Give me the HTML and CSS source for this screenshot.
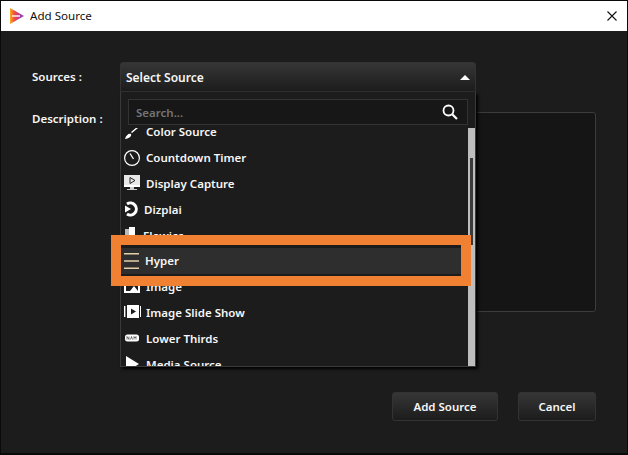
FILE: index.html
```html
<!DOCTYPE html>
<html lang="en">
<head>
<meta charset="utf-8">
<title>Add Source</title>
<link rel="stylesheet" href="styles.css">
</head>
<body>
<div class="window">
  <header class="titlebar">
    <svg class="logo" width="14" height="16" viewBox="0 0 14 16">
      <defs>
        <linearGradient id="lg" x1="0" y1="0" x2="1" y2="0">
          <stop offset="0" stop-color="#fbb01a"/>
          <stop offset=".3" stop-color="#f0503a"/>
          <stop offset=".65" stop-color="#c0359a"/>
          <stop offset="1" stop-color="#6c4bc4"/>
        </linearGradient>
      </defs>
      <path d="M0 0 L14 8 L0 16 Z" fill="url(#lg)"/>
      <rect x="2" y="7" width="8" height="2" fill="#fff" opacity=".7"/>
    </svg>
    <span class="title">Add Source</span>
    <svg class="close" width="10" height="10" viewBox="0 0 10 10"><path d="M0.5 0.5 L9.5 9.5 M9.5 0.5 L0.5 9.5" stroke="#111" stroke-width="1.1" fill="none"/></svg>
  </header>
  <main class="content">
    <form class="form">
      <label class="label label-center">Sources :</label>
      <div class="select">
        <div class="select-head">
          <span>Select Source</span>
          <svg width="10" height="5" viewBox="0 0 10 5"><path d="M5 0 L10 5 L0 5 Z" fill="#fff"/></svg>
        </div>
        <div class="panel">
          <div class="search">
            <span class="placeholder">Search...</span>
            <svg width="16" height="16" viewBox="0 0 16 16"><circle cx="6.5" cy="6.5" r="5" stroke="#fff" stroke-width="1.8" fill="none"/><path d="M10.5 10.5 L15 15" stroke="#fff" stroke-width="2.2"/></svg>
          </div>
          <div class="list-wrap">
            <ul class="list">
              <li class="item">
                <svg class="icon" viewBox="0 0 18 18"><path d="M2 16 C3 12 6 10 8 11 C9 13 6 16 2 16 Z M9 10 L8 9 L14 4 L15 5 Z" fill="#fff"/></svg>
                <span>Color Source</span>
              </li>
              <li class="item">
                <svg class="icon" viewBox="0 0 18 18"><circle cx="9" cy="9" r="7.4" stroke="#fff" stroke-width="1.2" fill="none"/><path d="M7 4.5 L10.5 10" stroke="#fff" stroke-width="1.3"/></svg>
                <span>Countdown Timer</span>
              </li>
              <li class="item">
                <svg class="icon" viewBox="0 0 18 18"><path d="M1 1 H17 V13 H1 Z" fill="#e8e8e8"/><path d="M7 3.5 L12 6.5 L7 9.5 Z" fill="none" stroke="#222"/><path d="M1 11 H17 V13 H1 Z" fill="#fff"/><path d="M7 13 H11 V15 H14 V16 H4 V15 H7 Z" fill="#ccc"/></svg>
                <span>Display Capture</span>
              </li>
              <li class="item item-tight">
                <svg class="icon" viewBox="0 0 18 18"><path d="M4 4 A6 6 0 1 1 4 14" stroke="#fff" stroke-width="3" fill="none"/><path d="M2 5.5 L8 9 L2 12.5 Z" fill="#fff"/></svg>
                <span>Dizplai</span>
              </li>
              <li class="item item-tighter">
                <svg class="icon" viewBox="0 0 18 18"><rect x="2" y="3" width="5" height="12" fill="#bbb"/><rect x="6" y="1" width="6" height="15" fill="#fff"/></svg>
                <span>Flowics</span>
              </li>
              <li class="item item-hyper">
                <svg class="icon" viewBox="0 0 18 18"><path d="M1 1 H16 V2.4 H1 Z M1 8.3 H16 V9.7 H1 Z M1 15.6 H16 V17 H1 Z" fill="#e6cfa8"/></svg>
                <span>Hyper</span>
              </li>
              <li class="item">
                <svg class="icon" viewBox="0 0 18 18"><path d="M1 2 H17 V15 H1 Z M3 4 V13 H15 V4 Z" fill="#fff" fill-rule="evenodd"/><path d="M7 13 L11 8 L15 13 Z" fill="#fff"/></svg>
                <span>Image</span>
              </li>
              <li class="item">
                <svg class="icon" viewBox="0 0 18 18"><rect x="4" y="2" width="12" height="13" fill="#fff"/><rect x="1" y="3" width="1.4" height="11" fill="#fff"/><rect x="17" y="3" width="1" height="11" fill="#fff"/><path d="M8 5.5 L13 8.5 L8 11.5 Z" fill="#1c1c1c"/></svg>
                <span>Image Slide Show</span>
              </li>
              <li class="item">
                <svg class="icon" viewBox="0 0 18 18"><rect x="2" y="5.5" width="14" height="7" rx="2.5" fill="#fff"/><path d="M4 10.5 V7.5 L6 10.5 V7.5 M7.5 10.5 L8.5 7.5 L9.5 10.5 M11 10.5 V7.5 L12 9 L13 7.5 V10.5" stroke="#222" stroke-width=".6" fill="none"/></svg>
                <span>Lower Thirds</span>
              </li>
              <li class="item">
                <svg class="icon" viewBox="0 0 18 18"><path d="M3 1 L16 9 L3 17 Z" fill="#fff"/></svg>
                <span>Media Source</span>
              </li>
            </ul>
            <div class="scrollbar"><div class="thumb"></div></div>
          </div>
        </div>
      </div>
      <label class="label">Description :</label>
      <div class="description"></div>
    </form>
    <footer class="actions">
      <button class="btn btn-add" type="button">Add Source</button>
      <button class="btn btn-cancel" type="button">Cancel</button>
    </footer>
  </main>
  <div class="annotation"></div>
</div>
</body>
</html>
```
FILE: styles.css
```css
* { box-sizing: border-box; }
html, body { margin: 0; height: 100%; }
body {
  font-family: "Noto Sans", "Open Sans", sans-serif;
  font-size: 11.5px;
  background: #000;
  overflow: hidden;
}
.window {
  position: relative;
  height: 455px;
  border: 1px solid #0a0a0a;
  border-bottom-width: 2px;
  display: flex;
  flex-direction: column;
  background: #1c1c1c;
}
.titlebar {
  height: 30px;
  flex: none;
  background: #fff;
  display: flex;
  align-items: center;
  padding: 0 10px 0 9px;
  color: #111;
}
.logo { flex: none; margin-right: 6px; }
.title { flex: 1; font-size: 11.6px; padding-bottom: 2px; }
.close { flex: none; }
.content {
  flex: 1;
  padding: 31px 31px 0;
  color: #f6f6f6;
  font-weight: 600;
}
.form {
  display: grid;
  grid-template-columns: 88px 1fr;
  grid-template-rows: 30px 200px;
  row-gap: 20px;
}
.label { line-height: 14px; }
.label-center { align-self: center; }
.select { position: relative; width: 356px; z-index: 2; }
.select-head {
  height: 30px;
  display: flex;
  align-items: center;
  justify-content: space-between;
  padding: 0 5px;
  font-size: 12px;
  background: linear-gradient(#363636, #1c1c1c);
  border: 1px solid #333;
  border-radius: 3px 3px 0 0;
}
.panel {
  position: absolute;
  left: 0;
  right: 0;
  top: 30px;
  height: 275px;
  background: #1c1c1c;
  border: 1px solid #3a3a3a;
  border-top: 0;
  box-shadow: 2px 2px 3px #000;
  display: flex;
  flex-direction: column;
}
.search {
  flex: none;
  height: 26px;
  margin: 7px 7px 3px;
  padding: 0 9px 0 7px;
  background: #171717;
  border: 1px solid #333;
  display: flex;
  align-items: center;
  justify-content: space-between;
}
.placeholder { color: #747474; }
.list-wrap { flex: 1; min-height: 0; display: flex; }
.list {
  flex: 1;
  min-width: 0;
  margin: 0;
  padding: 0;
  list-style: none;
  overflow: hidden;
}
.item {
  height: 25.8px;
  display: flex;
  align-items: center;
  padding-left: 2px;
  gap: 5px;
  color: #f6f6f6;
}
.item:first-child { margin-top: -9px; }
.icon { width: 18px; height: 18px; flex: none; }
.item-tight { gap: 3px; }
.item-tighter { gap: 2px; }
.item-hyper { gap: 4px; background: #2e2e2e; }
.scrollbar {
  flex: none;
  width: 7px;
  padding-top: 30px;
  background: #bdbdbd;
  display: flex;
  justify-content: center;
}
.thumb { width: 3px; height: 87px; background: #3a3a3a; }
.description {
  background: #151515;
  border: 1px solid #3c3c3c;
  border-radius: 3px;
}
.actions {
  margin-top: 80px;
  display: flex;
  justify-content: flex-end;
  gap: 20px;
}
.btn {
  height: 29px;
  padding: 0;
  font: inherit;
  color: #f6f6f6;
  background: linear-gradient(#363636, #1c1c1c);
  border: 1px solid #333;
  border-radius: 3px;
}
.btn-add { width: 106px; }
.btn-cancel { width: 78px; }
.annotation {
  position: absolute;
  left: 110px;
  top: 234px;
  width: 360px;
  height: 51px;
  border: 10px solid #f08133;
  z-index: 3;
}
```
